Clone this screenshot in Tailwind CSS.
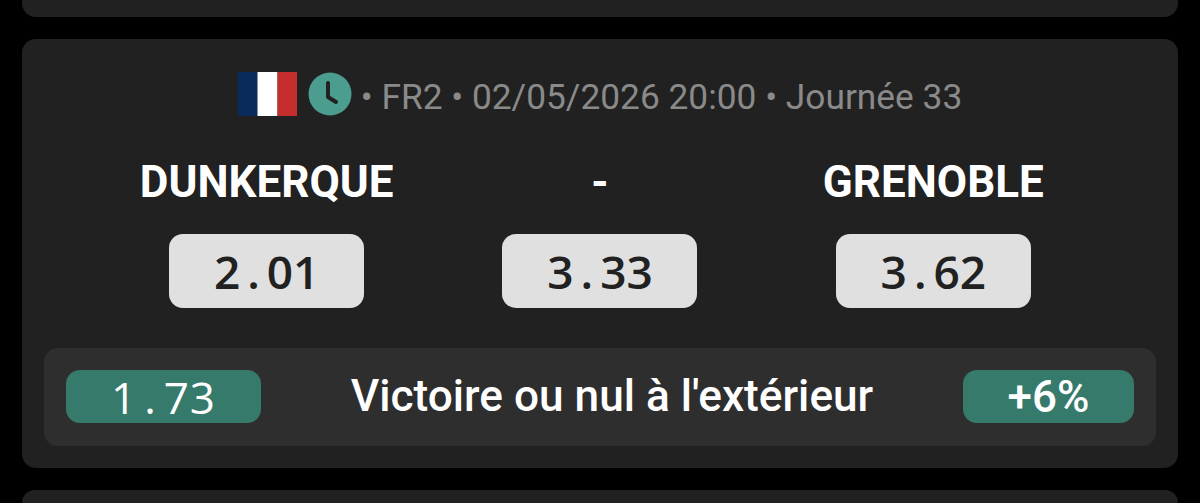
<!DOCTYPE html>
<html lang="fr">
<head>
    <meta charset="UTF-8">
    <meta name="viewport" content="width=device-width, initial-scale=1.0">
    <title>Matchs</title>
    <script src="https://cdn.jsdelivr.net/npm/@tailwindcss/browser@4"></script>
</head>
<body class="bg-black h-[503px] overflow-hidden font-['Roboto',sans-serif]">
    <div class="flex flex-col gap-[22px] px-[22px] mt-[-40px]">
        <!-- carte précédente -->
        <div class="h-[57px] bg-[#212121] rounded-[14px]"></div>

        <!-- match -->
        <div class="h-[429px] bg-[#212121] rounded-[14px] px-[22px] pt-[31px]">
            <div class="h-[52px] flex items-center justify-center text-[35.3px] text-[#8a8a8a]">
                <svg class="w-[59px] h-[44px] mr-[11px] mb-[4px]" viewBox="0 0 59 44">
                    <rect width="19.5" height="44" fill="#0b2a5c"/>
                    <rect x="19.5" width="20" height="44" fill="#ffffff"/>
                    <rect x="39.5" width="19.5" height="44" fill="#c62e2e"/>
                </svg>
                <svg class="w-[44px] h-[44px] mr-[9px] mb-[4px]" viewBox="0 0 44 44">
                    <circle cx="22" cy="22" r="21.5" fill="#4a9d8f"/>
                    <path d="M20 11v14l8 5" fill="none" stroke="#212121" stroke-width="4" stroke-linecap="round" stroke-linejoin="round"/>
                </svg>
                <span class="pt-[2px]">• FR2 • 02/05/2026 20:00 • Journée 33</span>
            </div>

            <div class="w-[1000px] mx-auto grid grid-cols-3 mt-[34px] justify-items-center">
                <div class="h-[52px] flex items-center text-[44px] font-bold text-white">DUNKERQUE</div>
                <div class="h-[52px] flex items-center text-[44px] font-bold text-white">-</div>
                <div class="h-[52px] flex items-center text-[44px] font-bold text-white">GRENOBLE</div>
                <div class="w-[195px] h-[74px] mt-[26px] flex items-center justify-center rounded-[14px] bg-[#e0e0e0] text-[#212121] text-[46px] font-semibold font-['Open_Sans',sans-serif]">2<span class="mx-[7px]">.</span>01</div>
                <div class="w-[195px] h-[74px] mt-[26px] flex items-center justify-center rounded-[14px] bg-[#e0e0e0] text-[#212121] text-[46px] font-semibold font-['Open_Sans',sans-serif]">3<span class="mx-[7px]">.</span>33</div>
                <div class="w-[195px] h-[74px] mt-[26px] flex items-center justify-center rounded-[14px] bg-[#e0e0e0] text-[#212121] text-[46px] font-semibold font-['Open_Sans',sans-serif]">3<span class="mx-[7px]">.</span>62</div>
            </div>

            <div class="h-[98px] mt-[40px] bg-[#2e2e2e] rounded-[14px] px-[22px] pb-[1px] flex items-center justify-between">
                <div class="w-[195px] h-[53px] flex items-center justify-center rounded-[14px] bg-[#367a6c] text-white text-[44px] font-['Open_Sans',sans-serif] tracking-[1px]">1<span class="mx-[7px]">.</span>73</div>
                <div class="text-[44.2px] font-medium text-white">Victoire ou nul à l'extérieur</div>
                <div class="w-[171px] h-[53px] flex items-center justify-center rounded-[14px] bg-[#367a6c] text-white text-[44px] font-medium">+6%</div>
            </div>
        </div>

        <!-- carte suivante -->
        <div class="h-[13px] bg-[#212121] rounded-t-[14px]"></div>
    </div>
</body>
</html>
